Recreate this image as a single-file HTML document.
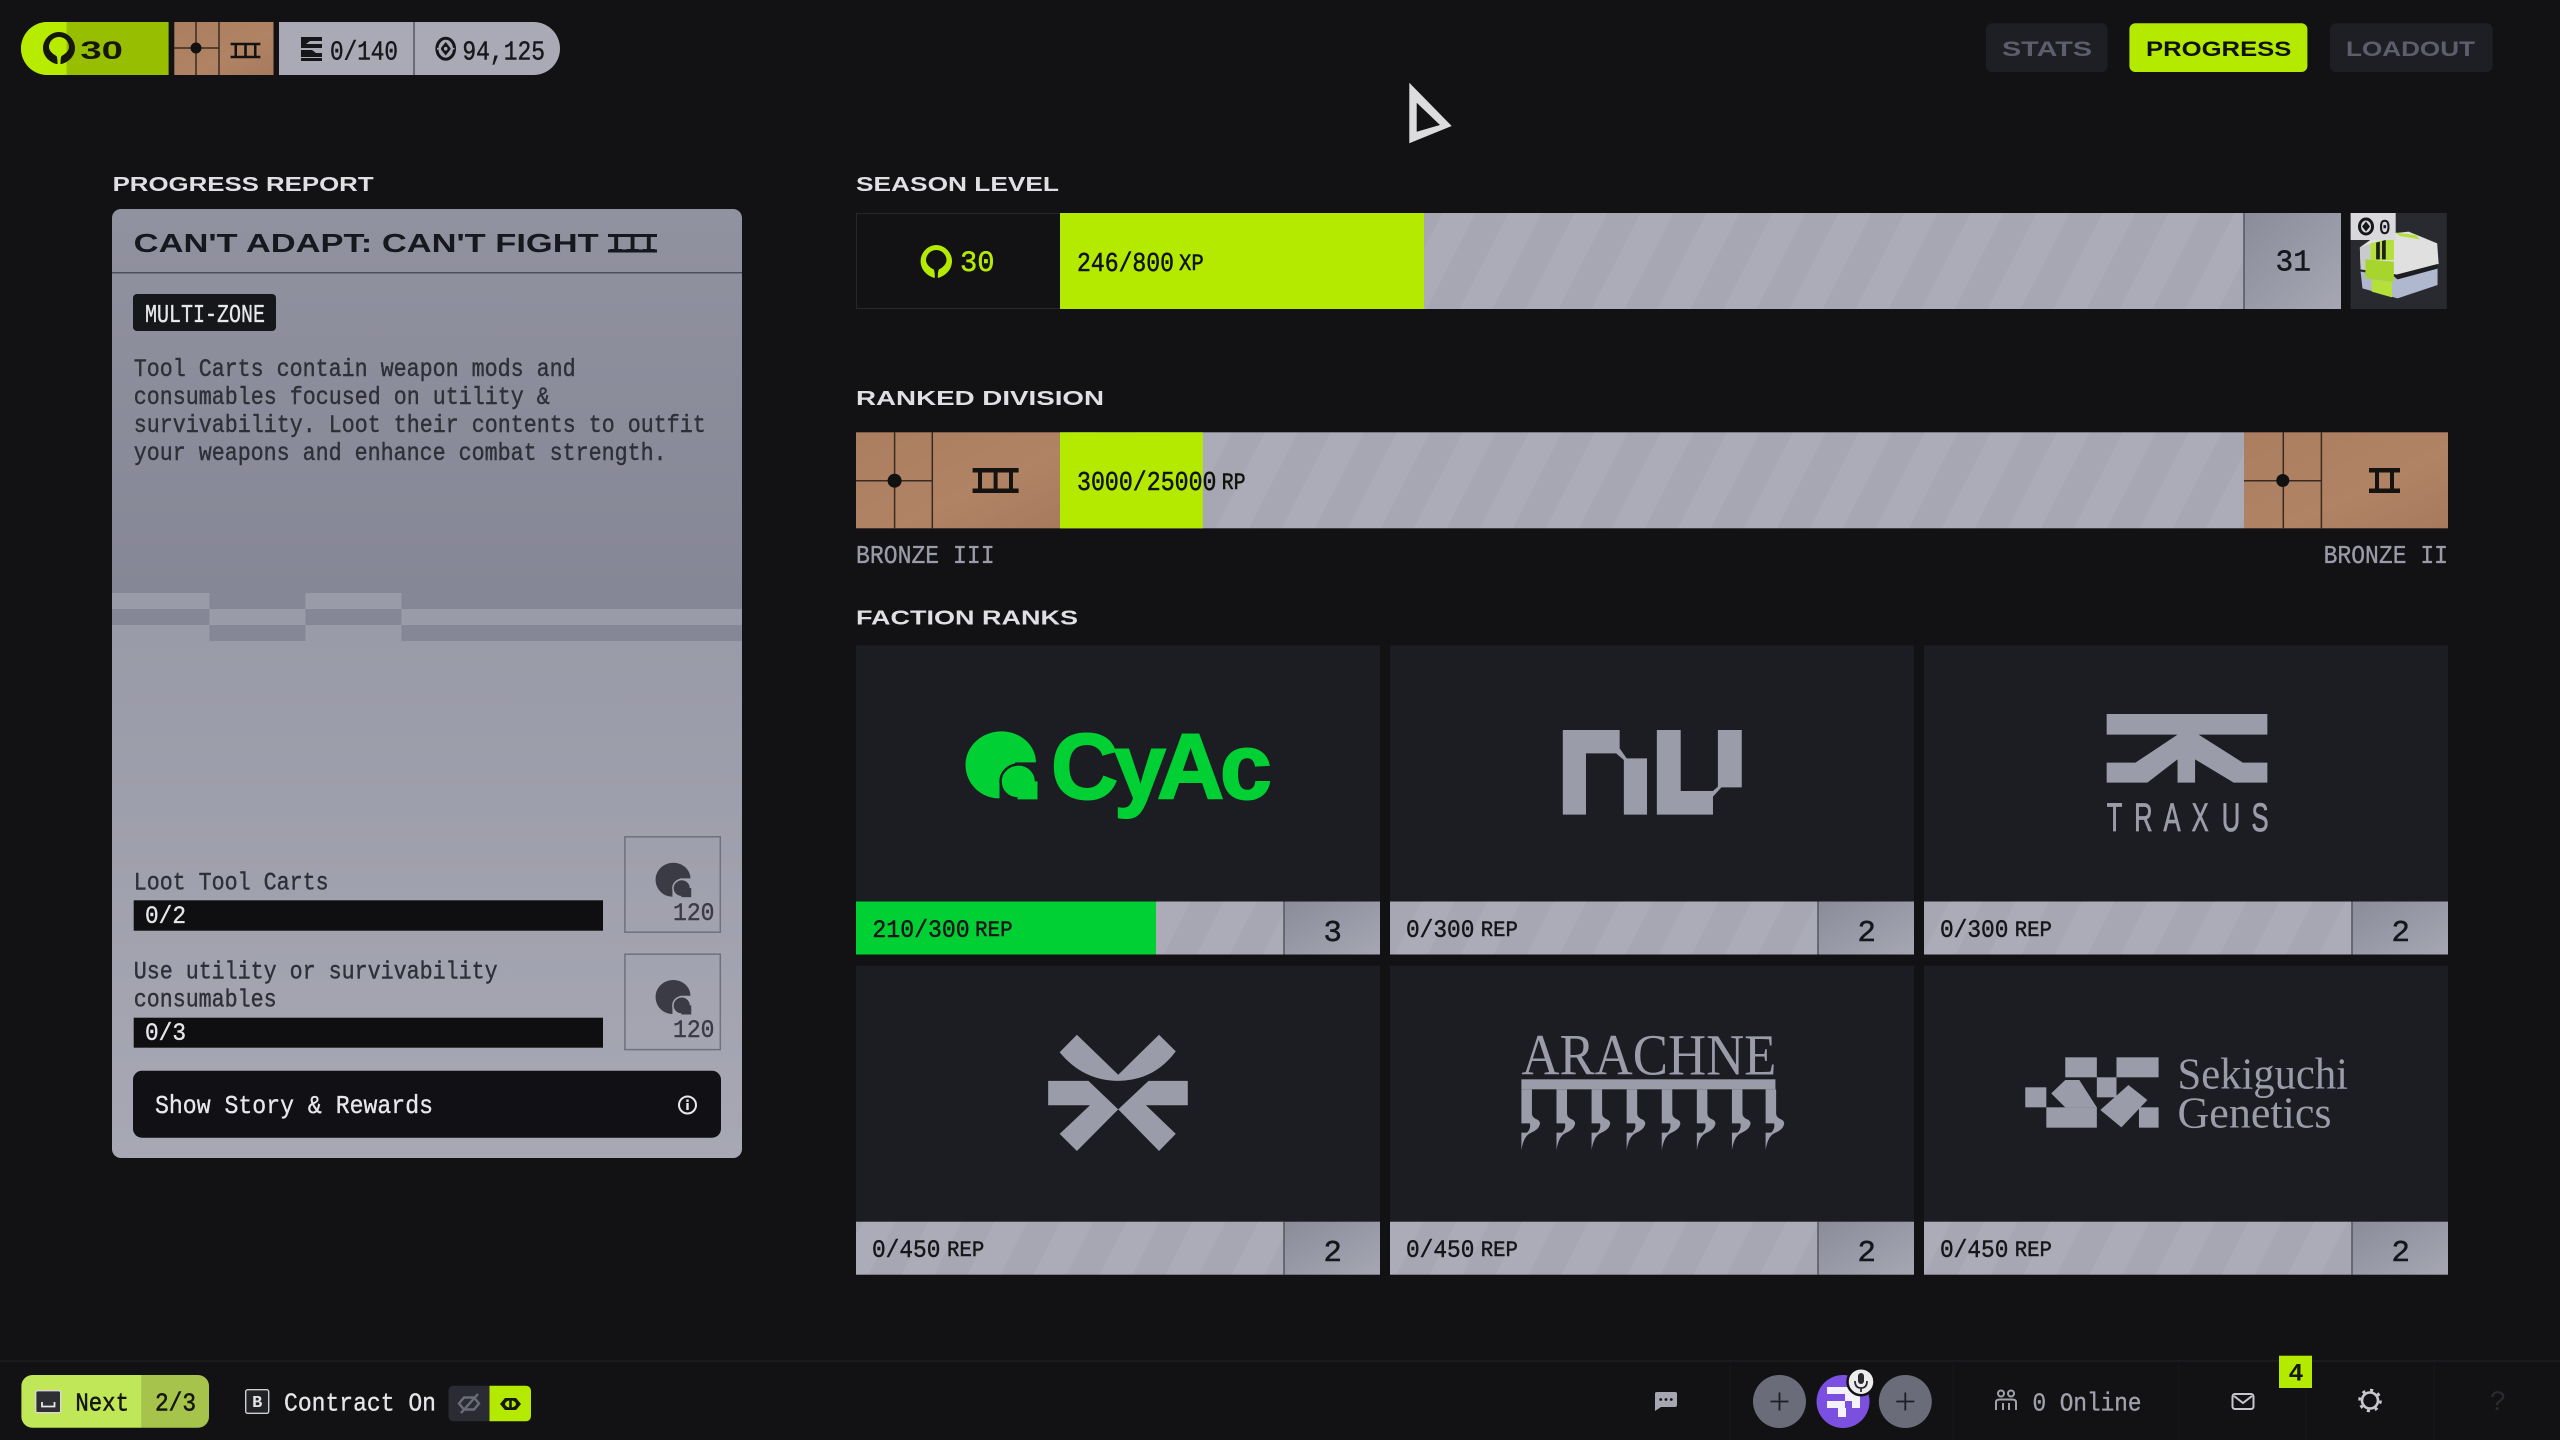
<!DOCTYPE html>
<html>
<head>
<meta charset="utf-8">
<title>Progress</title>
<style>
html,body{margin:0;padding:0;background:#121215;width:2560px;height:1440px;overflow:hidden}
svg{display:block}
.m{font-family:"Liberation Mono",monospace}
.h{font-family:"Liberation Sans",sans-serif;font-weight:700}
text{white-space:pre}
.d{stroke:#15161a;stroke-width:.45}
.p{stroke:#2e2f37;stroke-width:.4}
.l{stroke:#e6e6ea;stroke-width:.35}
.g{stroke:#9a9ba8;stroke-width:.35}
.i{stroke:#3a3b45;stroke-width:.4}
.y{stroke:#0f120a;stroke-width:.5}
</style>
</head>
<body>
<svg width="2560" height="1440" viewBox="0 0 2560 1440" xmlns="http://www.w3.org/2000/svg">
<defs>
<pattern id="st" patternUnits="userSpaceOnUse" width="66" height="96" patternTransform="skewX(-27)">
<rect width="66" height="96" fill="#abacb7"/><rect width="33" height="96" fill="#a6a7b3"/>
</pattern>
<linearGradient id="pn" x1="0" y1="0" x2="0" y2="1">
<stop offset="0" stop-color="#9192a0"/><stop offset=".405" stop-color="#868796"/><stop offset=".455" stop-color="#868796"/><stop offset=".455" stop-color="#9a9ba8"/><stop offset="1" stop-color="#a7a8b4"/>
</linearGradient>
<linearGradient id="nb" x1="0" y1="0" x2="1" y2="1">
<stop offset="0" stop-color="#8b8c9a"/><stop offset="1" stop-color="#a6a7b3"/>
</linearGradient>
<linearGradient id="br" x1="0" y1="0" x2="1" y2="1">
<stop offset="0" stop-color="#ab7e60"/><stop offset=".6" stop-color="#b08365"/><stop offset="1" stop-color="#a67a5d"/>
</linearGradient>
</defs>
<rect width="2560" height="1440" fill="#121215"/>

<!-- top left pill -->
<path d="M168.6 22H47.5A26.5 26.5 0 0 0 47.5 75H168.6Z" fill="#97bf00"/>
<path d="M66.5 22H47.5A26.5 26.5 0 0 0 47.5 75H66.5Z" fill="#b7ec00"/>
<path fill-rule="evenodd" d="M59 32C50 32 43 40 43 48C43 56 49 62 56.5 64H61.5C69 62 75 56 75 48C75 40 68 32 59 32ZM59 37C65 37 69 42 69 47C69 51 65 54 61.5 56C60.5 58 60.5 61 60.5 64H57.5C57.5 61 57.5 58 56.5 56C53 54 49 51 49 47C49 42 53 37 59 37Z" fill="#15170c"/>
<text class="h" x="80.4" y="59" font-size="25" textLength="42.6" lengthAdjust="spacingAndGlyphs" fill="#15170c">30</text>

<!-- bronze top -->
<rect x="174.3" y="22" width="99.2" height="53" fill="url(#br)"/>
<path d="M196 22V75M219 22V75M174.3 48H219" stroke="#3b2a20" stroke-width="1.5" fill="none"/>
<circle cx="196" cy="48" r="5.5" fill="#111"/>
<path d="M230.6 42.7H260.4V45.2H230.6ZM230.6 55.8H260.4V58.3H230.6ZM234.5 45H237V56H234.5ZM244.2 45H246.8V56H244.2ZM254 45H256.5V56H254Z" fill="#15130f"/>

<!-- grey pill -->
<path d="M279 22H533.5A26.5 26.5 0 0 1 533.5 75H279Z" fill="#a9aab6"/>
<path d="M414 22V75" stroke="#55565f" stroke-width="1.5"/>
<path d="M301 37H322V41H310L306 44H322V48H301ZM301 50H312L316 53H322V57H301ZM301 58H322V61H301Z" fill="#15161a"/>
<text class="m d" x="330" y="59.3" font-size="27" textLength="68" lengthAdjust="spacingAndGlyphs" fill="#17181c">0/140</text>
<ellipse cx="445.7" cy="48.7" rx="8.8" ry="10.5" fill="none" stroke="#15161a" stroke-width="3"/>
<path d="M445.7 42L451 48.7L445.7 55.5L440.4 48.7Z" fill="#15161a"/>
<path d="M437 48.7H441M450.5 48.7H454.5" stroke="#a9aab6" stroke-width="1.6"/>
<circle cx="445.7" cy="48.7" r="1.8" fill="#a9aab6"/>
<text class="m d" x="462.4" y="59.3" font-size="27" textLength="82.6" lengthAdjust="spacingAndGlyphs" fill="#17181c">94,125</text>

<!-- top nav -->
<rect x="1986" y="23.3" width="121.5" height="48.7" rx="6" fill="#1e1f24"/>
<text class="h" x="2002" y="56" font-size="21" textLength="90" lengthAdjust="spacingAndGlyphs" fill="#5d5e6c">STATS</text>
<rect x="2129.4" y="23.3" width="178" height="48.7" rx="6" fill="#b4ea00"/>
<text class="h" x="2146" y="56" font-size="21" textLength="145.4" lengthAdjust="spacingAndGlyphs" fill="#0f120a">PROGRESS</text>
<rect x="2330" y="23.3" width="162.6" height="48.7" rx="6" fill="#1e1f24"/>
<text class="h" x="2346" y="56" font-size="21" textLength="129" lengthAdjust="spacingAndGlyphs" fill="#5d5e6c">LOADOUT</text>

<!-- cursor -->
<path fill-rule="evenodd" d="M1409.3 82.7L1451.7 126L1409.3 143.3ZM1416.7 102.7V131.7L1440 125Z" fill="#dcdcdf"/>

<!-- headings -->
<text class="h" x="112.6" y="191" font-size="20" textLength="261" lengthAdjust="spacingAndGlyphs" fill="#e0e0e4">PROGRESS REPORT</text>
<text class="h" x="856" y="191" font-size="20" textLength="203" lengthAdjust="spacingAndGlyphs" fill="#e0e0e4">SEASON LEVEL</text>
<text class="h" x="856" y="405" font-size="20" textLength="248" lengthAdjust="spacingAndGlyphs" fill="#e0e0e4">RANKED DIVISION</text>
<text class="h" x="856" y="624.5" font-size="20" textLength="222" lengthAdjust="spacingAndGlyphs" fill="#e0e0e4">FACTION RANKS</text>

<!-- left panel -->
<rect x="112" y="209" width="630" height="949" rx="9" fill="url(#pn)"/>
<g fill="#9a9ba8">
<rect x="112" y="593" width="97.4" height="16"/><rect x="305.4" y="593" width="96" height="16"/>
<rect x="209.4" y="609" width="96" height="16"/><rect x="401.4" y="609" width="340.6" height="16"/>
<rect x="112" y="625" width="97.4" height="16"/><rect x="305.4" y="625" width="96" height="16"/>
</g>
<path d="M112 272.7H742" stroke="#4e4f5a" stroke-width="1.5"/>
<text class="h" x="133.7" y="252" font-size="26" textLength="465" lengthAdjust="spacingAndGlyphs" fill="#17181d">CAN'T ADAPT: CAN'T FIGHT</text>
<text class="m" x="608" y="252" font-size="27" font-weight="700" textLength="49" lengthAdjust="spacingAndGlyphs" fill="#17181d">III</text>
<path d="M608 234H657V237H608ZM608 249.5H657V252.5H608Z" fill="#17181d"/>
<rect x="133" y="294" width="143" height="37" rx="4" fill="#16171b"/>
<text class="m l" x="145" y="322" font-size="26" textLength="120" lengthAdjust="spacingAndGlyphs" fill="#e8e8ea">MULTI-ZONE</text>
<g class="m p" font-size="25" fill="#2e2f37">
<text x="133.7" y="376" textLength="442" lengthAdjust="spacingAndGlyphs">Tool Carts contain weapon mods and</text>
<text x="133.7" y="404" textLength="416" lengthAdjust="spacingAndGlyphs">consumables focused on utility &amp;</text>
<text x="133.7" y="432" textLength="572" lengthAdjust="spacingAndGlyphs">survivability. Loot their contents to outfit</text>
<text x="133.7" y="460" textLength="533" lengthAdjust="spacingAndGlyphs">your weapons and enhance combat strength.</text>
<text x="133.7" y="889.3" textLength="195" lengthAdjust="spacingAndGlyphs">Loot Tool Carts</text>
<text x="133.7" y="978.3" textLength="364" lengthAdjust="spacingAndGlyphs">Use utility or survivability</text>
<text x="133.7" y="1006.7" textLength="143" lengthAdjust="spacingAndGlyphs">consumables</text>
</g>
<rect x="133.7" y="900.3" width="469.3" height="30.4" fill="#0f0f12"/>
<text class="m l" x="145" y="923" font-size="25" textLength="41" lengthAdjust="spacingAndGlyphs" fill="#e6e6ea">0/2</text>
<rect x="133.7" y="1017.7" width="469.3" height="30" fill="#0f0f12"/>
<text class="m l" x="145" y="1040" font-size="25" textLength="41" lengthAdjust="spacingAndGlyphs" fill="#e6e6ea">0/3</text>
<rect x="624.9" y="836.8" width="95.4" height="95.4" fill="none" stroke="#6f7080" stroke-width="1.5"/>
<rect x="624.9" y="954.2" width="95.4" height="95.4" fill="none" stroke="#6f7080" stroke-width="1.5"/>
<g transform="translate(655.6 862.7) scale(.495 .507)">
<path d="M70.5 31C70.5 14 55 0 36 0C16 0 0 15 0 33.5C0 52 15 67 34 67V50L50 31Z" fill="#3a3b45"/>
<path d="M53 33C63 33 70.5 41 70.5 50V67H52C42 67 35 59 35 50C35 41 43 33 53 33Z" fill="#3a3b45" stroke="#a3a4b0" stroke-width="3"/>
<rect x="52" y="50" width="20" height="18" fill="#3a3b45"/>
</g>
<g transform="translate(655.6 980) scale(.495 .507)">
<path d="M70.5 31C70.5 14 55 0 36 0C16 0 0 15 0 33.5C0 52 15 67 34 67V50L50 31Z" fill="#3a3b45"/>
<path d="M53 33C63 33 70.5 41 70.5 50V67H52C42 67 35 59 35 50C35 41 43 33 53 33Z" fill="#3a3b45" stroke="#a5a6b2" stroke-width="3"/>
<rect x="52" y="50" width="20" height="18" fill="#3a3b45"/>
</g>
<text class="m i" x="673" y="920" font-size="25" textLength="41.5" lengthAdjust="spacingAndGlyphs" fill="#3a3b45">120</text>
<text class="m i" x="673" y="1037" font-size="25" textLength="41.5" lengthAdjust="spacingAndGlyphs" fill="#3a3b45">120</text>
<rect x="133" y="1070.7" width="588" height="67" rx="9" fill="#111115"/>
<text class="m l" x="155" y="1113" font-size="26" textLength="278" lengthAdjust="spacingAndGlyphs" fill="#e8e8ea">Show Story &amp; Rewards</text>
<circle cx="687.5" cy="1105" r="8.5" fill="none" stroke="#e8e8ea" stroke-width="2"/>
<rect x="686.3" y="1103" width="2.4" height="7" fill="#e8e8ea"/><rect x="686.3" y="1099.5" width="2.4" height="2.4" fill="#e8e8ea"/>

<!-- season level -->
<rect x="856.5" y="213.5" width="204" height="95" fill="none" stroke="#26272d"/>
<path fill-rule="evenodd" d="M936.3 245C927.5 245 920.6 253 920.6 261C920.6 269 926 275 933.5 277.7H939C946.5 275 952 269 952 261C952 253 945 245 936.3 245ZM936.3 250C942 250 946.5 255 946.5 260C946.5 264 943 267.5 938.8 269.5C937.8 272 937.8 275 937.8 277.7H934.8C934.8 275 934.8 272 933.8 269.5C929.5 267.5 926 264 926 260C926 255 930.5 250 936.3 250Z" fill="#b4ea00"/>
<text class="m" x="960" y="271" font-size="30" stroke="#b4ea00" stroke-width=".5" textLength="34.6" lengthAdjust="spacingAndGlyphs" fill="#b4ea00">30</text>
<rect x="1060" y="213" width="1184" height="96" fill="url(#st)"/>
<rect x="1060" y="213" width="364" height="96" fill="#b4ea00"/>
<text class="m y" x="1077" y="271" font-size="27" textLength="97" lengthAdjust="spacingAndGlyphs" fill="#0f120a">246/800</text>
<text class="m y" x="1179" y="270" font-size="23" textLength="24.8" lengthAdjust="spacingAndGlyphs" fill="#0f120a">XP</text>
<rect x="2244" y="213" width="97" height="96" fill="url(#nb)"/>
<path d="M2244 213V309" stroke="#55565f" stroke-width="1.5"/>
<text class="m d" x="2275.5" y="270.7" font-size="31" textLength="35.5" lengthAdjust="spacingAndGlyphs" fill="#15161a">31</text>

<!-- reward -->
<rect x="2350.6" y="213" width="96.2" height="96" fill="#292a2f"/>
<g transform="translate(1900 160) scale(.36996 .33333)">
<path d="M1243 262L1290 225L1375 215L1452 250L1456 312L1345 344L1245 328Z" fill="#e0e0e1"/>
<path d="M1243 262L1275 250V328L1245 328Z" fill="#c9cacb"/>
<path d="M1245 335L1345 352L1453 322V375L1345 415L1250 385Z" fill="#b0b8cf"/>
<path d="M1338 345L1453 312V326L1345 358L1338 352Z" fill="#1d1e23"/>
<path d="M1272 250L1335 232L1335 300H1272Z" fill="#b4e03a"/>
<path d="M1258 298L1335 305V365L1258 355Z" fill="#a8d42e"/>
<path d="M1275 358L1330 365V412L1275 395Z" fill="#b4e03a"/>
<path d="M1287 248L1297 245V298H1287ZM1303 243L1313 240V298H1303Z" fill="#1d1e23"/>
<path d="M1340 218L1395 225L1405 238L1350 228Z" fill="#b4e03a"/>
</g>
<rect x="2350.6" y="213" width="45.1" height="27" fill="#d9d9dd"/>
<ellipse cx="2366" cy="226.5" rx="6.5" ry="7.5" fill="none" stroke="#15161a" stroke-width="3"/>
<path d="M2366 221.5L2370 226.5L2366 231.5L2362 226.5Z" fill="#15161a"/>
<text class="m d" x="2379" y="234" font-size="21" textLength="11.5" lengthAdjust="spacingAndGlyphs" fill="#15161a">0</text>

<!-- ranked -->
<rect x="856" y="432.3" width="204" height="96" fill="url(#br)"/>
<path d="M894.6 432.3V528.3M932.3 432.3V528.3M856 480.7H932.3" stroke="#3b2a20" stroke-width="1.5" fill="none"/>
<circle cx="894.6" cy="480.7" r="7" fill="#111"/>
<path d="M972.6 468H1018.6V472.5H972.6ZM972.6 488.5H1018.6V493H972.6ZM978 472H982V489H978ZM993.6 472H997.6V489H993.6ZM1009 472H1013V489H1009Z" fill="#15130f"/>
<rect x="1060" y="432.3" width="1184" height="96" fill="url(#st)"/>
<rect x="1060" y="432.3" width="142.8" height="96" fill="#b4ea00"/>
<text class="m y" x="1077" y="490" font-size="27" textLength="139.5" lengthAdjust="spacingAndGlyphs" fill="#0f120a">3000/25000</text>
<text class="m y" x="1221.6" y="489" font-size="23" textLength="24" lengthAdjust="spacingAndGlyphs" fill="#0f120a">RP</text>
<rect x="2244" y="432.3" width="204" height="96" fill="url(#br)"/>
<path d="M2283.3 432.3V528.3M2321.4 432.3V528.3M2244 480.7H2321.4" stroke="#3b2a20" stroke-width="1.5" fill="none"/>
<circle cx="2282.8" cy="480.5" r="6.5" fill="#111"/>
<path d="M2369 468H2400V472.5H2369ZM2369 488.5H2400V493H2369ZM2375 472H2379V489H2375ZM2390 472H2394V489H2390Z" fill="#15130f"/>
<text class="m g" x="856" y="563" font-size="26" textLength="138.6" lengthAdjust="spacingAndGlyphs" fill="#9a9ba8">BRONZE III</text>
<text class="m g" x="2323.6" y="563" font-size="26" textLength="124.4" lengthAdjust="spacingAndGlyphs" fill="#9a9ba8">BRONZE II</text>

<!-- faction cards -->
<g fill="#1c1d22">
<rect x="856" y="645.3" width="524" height="256"/><rect x="1390" y="645.3" width="524" height="256"/><rect x="1924" y="645.3" width="524" height="256"/>
<rect x="856" y="965.7" width="524" height="256"/><rect x="1390" y="965.7" width="524" height="256"/><rect x="1924" y="965.7" width="524" height="256"/>
</g>
<g fill="url(#st)">
<rect x="856" y="901.5" width="428" height="53"/><rect x="1390" y="901.5" width="428" height="53"/><rect x="1924" y="901.5" width="428" height="53"/>
<rect x="856" y="1221.7" width="428" height="53"/><rect x="1390" y="1221.7" width="428" height="53"/><rect x="1924" y="1221.7" width="428" height="53"/>
</g>
<g fill="url(#nb)">
<rect x="1284" y="901.5" width="96" height="53"/><rect x="1818" y="901.5" width="96" height="53"/><rect x="2352" y="901.5" width="96" height="53"/>
<rect x="1284" y="1221.7" width="96" height="53"/><rect x="1818" y="1221.7" width="96" height="53"/><rect x="2352" y="1221.7" width="96" height="53"/>
</g>
<path d="M1284 901.5V954.5M1818 901.5V954.5M2352 901.5V954.5M1284 1221.7V1274.7M1818 1221.7V1274.7M2352 1221.7V1274.7" stroke="#55565f" stroke-width="1.5"/>
<rect x="856" y="901.5" width="300" height="53" fill="#00d033"/>
<g class="m d" font-size="25" fill="#15161a">
<text x="872.4" y="937" textLength="97.3" lengthAdjust="spacingAndGlyphs">210/300</text>
<text x="975" y="936" font-size="22" textLength="37.6" lengthAdjust="spacingAndGlyphs">REP</text>
<text x="1406" y="937" textLength="68.4" lengthAdjust="spacingAndGlyphs">0/300</text>
<text x="1480.7" y="936" font-size="22" textLength="37.3" lengthAdjust="spacingAndGlyphs">REP</text>
<text x="1940" y="937" textLength="68.4" lengthAdjust="spacingAndGlyphs">0/300</text>
<text x="2014.7" y="936" font-size="22" textLength="37.3" lengthAdjust="spacingAndGlyphs">REP</text>
<text x="872" y="1257" textLength="68.4" lengthAdjust="spacingAndGlyphs">0/450</text>
<text x="947" y="1256" font-size="22" textLength="37.3" lengthAdjust="spacingAndGlyphs">REP</text>
<text x="1406" y="1257" textLength="68.4" lengthAdjust="spacingAndGlyphs">0/450</text>
<text x="1480.7" y="1256" font-size="22" textLength="37.3" lengthAdjust="spacingAndGlyphs">REP</text>
<text x="1940" y="1257" textLength="68.4" lengthAdjust="spacingAndGlyphs">0/450</text>
<text x="2014.7" y="1256" font-size="22" textLength="37.3" lengthAdjust="spacingAndGlyphs">REP</text>
</g>
<g class="m d" font-size="31" fill="#15161a" text-anchor="middle">
<text x="1332.7" y="940.8">3</text><text x="1866.7" y="940.8">2</text><text x="2400.7" y="940.8">2</text>
<text x="1332.7" y="1261">2</text><text x="1866.7" y="1261">2</text><text x="2400.7" y="1261">2</text>
</g>

<!-- CyAc -->
<g transform="translate(965.5 731.4)">
<path d="M70.5 31C70.5 14 55 0 36 0C16 0 0 15 0 33.5C0 52 15 67 34 67V50L50 31Z" fill="#00d033"/>
<path d="M53 33C63 33 70.5 41 70.5 50V67H52C42 67 35 59 35 50C35 41 43 33 53 33Z" fill="#00d033" stroke="#1c1d22" stroke-width="2.5"/>
<rect x="52" y="50" width="20" height="18" fill="#00d033"/>
</g>
<text class="h" y="798.4" font-size="93" stroke="#00d033" stroke-width="2" fill="#00d033" x="1051 1114 1157 1220">CyAc</text>

<!-- logos -->
<g transform="translate(1360 640) scale(.70175 .33333)" fill="#9b9ca9">
<path d="M289 270H370V325L380 355H409V524H376V360L365 340H322V524H289Z"/>
<path d="M423 270H457V453H503L510 440V270H544V442H515L503 470V524H423Z"/>
<path d="M1064 222H1293V284H1195L1258 368H1293V428H1245L1190 358V428H1165V358L1122 428H1064V368H1105L1165 284H1064Z"/>
</g>
<text transform="translate(2106.7 831) scale(.64 1)" font-family="Liberation Sans, sans-serif" font-size="40" stroke="#9b9ca9" stroke-width=".8" fill="#9b9ca9" x="0 42.8 88.8 132.7 179.7 226.3" y="0">TRAXUS</text>

<g transform="translate(840 640) scale(.523 .40816)" fill="#9b9ca9">
<path d="M420 1010L453 967L532 1065L610 967L642 1008Q600 1080 532 1080Q465 1080 420 1010Z"/>
<path d="M398 1140H478L420 1210L453 1252L532 1150L610 1252L642 1210L585 1140H665V1080H590L532 1150L475 1080H398Z"/>
</g>

<text x="1521.4" y="1074.3" font-family="Liberation Serif, serif" font-size="58" textLength="255" lengthAdjust="spacingAndGlyphs" fill="#9b9ca9">ARACHNE</text>
<g transform="translate(1360 960) scale(.70175 .33333)" fill="#9b9ca9">
<rect x="230" y="358" width="362" height="30"/>
<path d="M230 388h15v72q0 12 7 18q6 6 4 17q-2 15-14 25q-9 10-12 50v-52h8q6-13 4-28h-12z"/>
<path d="M280 388h15v72q0 12 7 18q6 6 4 17q-2 15-14 25q-9 10-12 50v-52h8q6-13 4-28h-12z"/>
<path d="M330 388h15v72q0 12 7 18q6 6 4 17q-2 15-14 25q-9 10-12 50v-52h8q6-13 4-28h-12z"/>
<path d="M380 388h15v72q0 12 7 18q6 6 4 17q-2 15-14 25q-9 10-12 50v-52h8q6-13 4-28h-12z"/>
<path d="M430 388h15v72q0 12 7 18q6 6 4 17q-2 15-14 25q-9 10-12 50v-52h8q6-13 4-28h-12z"/>
<path d="M480 388h15v72q0 12 7 18q6 6 4 17q-2 15-14 25q-9 10-12 50v-52h8q6-13 4-28h-12z"/>
<path d="M530 388h15v72q0 12 7 18q6 6 4 17q-2 15-14 25q-9 10-12 50v-52h8q6-13 4-28h-12z"/>
<path d="M578 388h15v72q0 12 7 18q6 6 4 17q-2 15-14 25q-9 10-12 50v-52h8q6-13 4-28h-12z"/>
<rect x="1005" y="292" width="45" height="60"/><rect x="1078" y="292" width="60" height="60"/>
<rect x="948" y="382" width="30" height="60"/><rect x="1050" y="352" width="28" height="60"/>
<rect x="978" y="442" width="72" height="61"/><rect x="1110" y="442" width="28" height="61"/>
<path d="M1005 360H1025L1050 442H1005L985 400Z"/>
<path d="M1095 375L1122 420L1085 502L1055 450Z"/>
</g>
<text x="2177.5" y="1088.3" font-family="Liberation Serif, serif" font-size="44" textLength="170.5" lengthAdjust="spacingAndGlyphs" fill="#9b9ca9">Sekiguchi</text>
<text x="2177.5" y="1127.7" font-family="Liberation Serif, serif" font-size="44" textLength="154" lengthAdjust="spacingAndGlyphs" fill="#9b9ca9">Genetics</text>

<!-- bottom bar -->
<path d="M0 1361H2560" stroke="#1d1e22" stroke-width="1.5"/>
<path d="M1730 1361V1440M1953 1361V1440M2179 1361V1440M2306 1361V1440M2434 1361V1440" stroke="#17181b" stroke-width="1"/>
<path d="M141.6 1375H198A11 11 0 0 1 209 1386V1416.7A11 11 0 0 1 198 1427.7H141.6Z" fill="#a6c44c"/>
<path d="M141.6 1375H32.4A11 11 0 0 0 21.4 1386V1416.7A11 11 0 0 0 32.4 1427.7H141.6Z" fill="#bfe757"/>
<rect x="35.7" y="1390.7" width="25" height="22" rx="2" fill="#2f2f33" stroke="#d8d8d8" stroke-width="1.4"/>
<path d="M42 1402V1406.5H54.5V1402" stroke="#e6e6e6" stroke-width="1.8" fill="none"/>
<text class="m y" x="75.4" y="1410.7" font-size="26" textLength="53.6" lengthAdjust="spacingAndGlyphs" fill="#15170a">Next</text>
<text class="m y" x="155" y="1410.7" font-size="26" textLength="41" lengthAdjust="spacingAndGlyphs" fill="#15170a">2/3</text>
<rect x="245.7" y="1389.7" width="23" height="23.6" rx="2" fill="#222327" stroke="#d0d0d4" stroke-width="1.4"/>
<text class="m" x="257.2" y="1407" font-size="17" font-weight="700" text-anchor="middle" fill="#e4e4e8">B</text>
<text class="m l" x="284" y="1410.7" font-size="26" textLength="152" lengthAdjust="spacingAndGlyphs" fill="#e6e6ea">Contract On</text>
<path d="M489.5 1385.7H453.5A5 5 0 0 0 448.5 1390.7V1416.3A5 5 0 0 0 453.5 1421.3H489.5Z" fill="#2b2c33"/>
<path d="M489.5 1385.7H526A5 5 0 0 1 531 1390.7V1416.3A5 5 0 0 1 526 1421.3H489.5Z" fill="#b4ea00"/>
<path d="M459 1403.5L464 1397.5H474L479 1403.5L474 1409.5H464ZM461 1413L478 1394" fill="none" stroke="#6b6c7a" stroke-width="2.4"/>
<path d="M500 1404L505 1398H516L521 1404L516 1410H505Z" fill="#15170a"/>
<ellipse cx="510.5" cy="1404" rx="5.5" ry="3.6" fill="#b4ea00"/><rect x="509.2" y="1400" width="2.6" height="8" fill="#15170a"/>

<path d="M1655 1393.5Q1655 1392 1657 1392H1675Q1677 1392 1677 1393.5V1405Q1677 1407 1675 1407H1661L1655 1411Z" fill="#a5a6b2"/>
<circle cx="1660.7" cy="1399.5" r="1.4" fill="#121215"/><circle cx="1666" cy="1399.5" r="1.4" fill="#121215"/><circle cx="1671.3" cy="1399.5" r="1.4" fill="#121215"/>

<circle cx="1779.5" cy="1401.5" r="26.5" fill="#6b6c7a"/>
<path d="M1779.5 1392.5V1410.5M1770.5 1401.5H1788.5" stroke="#1d1e24" stroke-width="1.8"/>
<circle cx="1905.3" cy="1401.5" r="26.5" fill="#6b6c7a"/>
<path d="M1905.3 1392.5V1410.5M1896.3 1401.5H1914.3" stroke="#1d1e24" stroke-width="1.8"/>
<circle cx="1843" cy="1401.5" r="26.5" fill="#7b4fdf"/>
<path d="M1827 1387H1860V1394H1827ZM1845 1394H1860V1401H1845ZM1827 1401H1845V1408H1827ZM1852 1401H1860V1408H1852ZM1838 1408H1846V1417H1838Z" fill="#f4f2fb"/>
<circle cx="1861" cy="1381.7" r="13.5" fill="#ededee" stroke="#121215" stroke-width="2.5"/>
<rect x="1858" y="1373" width="6" height="11" rx="3" fill="#2a2b30"/>
<path d="M1855 1381Q1855 1388 1861 1388Q1867 1388 1867 1381M1861 1388V1392" fill="none" stroke="#2a2b30" stroke-width="1.8"/>

<circle cx="2001" cy="1393.5" r="3" fill="none" stroke="#a0a1aa" stroke-width="2"/>
<circle cx="2011" cy="1393.5" r="3" fill="none" stroke="#a0a1aa" stroke-width="2"/>
<path d="M1996 1410V1402Q1996 1399.5 2000 1399.5H2012Q2016 1399.5 2016 1402V1410M2003 1410V1403M2009 1410V1403" fill="none" stroke="#a0a1aa" stroke-width="2"/>
<text class="m" x="2032.5" y="1410.7" font-size="26" stroke="#a0a1aa" stroke-width=".35" textLength="109" lengthAdjust="spacingAndGlyphs" fill="#a0a1aa">0 Online</text>

<rect x="2232.5" y="1394" width="21" height="15" rx="2.5" fill="none" stroke="#c6c7ce" stroke-width="2"/>
<path d="M2234 1396L2243 1403L2252 1396" fill="none" stroke="#c6c7ce" stroke-width="2"/>
<rect x="2279" y="1355.7" width="33" height="32.3" fill="#b4ea00"/>
<text class="m" x="2296" y="1380.7" font-size="25" font-weight="700" text-anchor="middle" fill="#15170a">4</text>
<circle cx="2370" cy="1400.5" r="8" fill="none" stroke="#c6c7ce" stroke-width="2.6"/>
<circle cx="2370" cy="1400.5" r="10.5" fill="none" stroke="#c6c7ce" stroke-width="2.6" stroke-dasharray="3.2 5"/>
<text class="m" x="2498" y="1410" font-size="28" text-anchor="middle" fill="#2a2b30">?</text>
</svg>
</body>
</html>
